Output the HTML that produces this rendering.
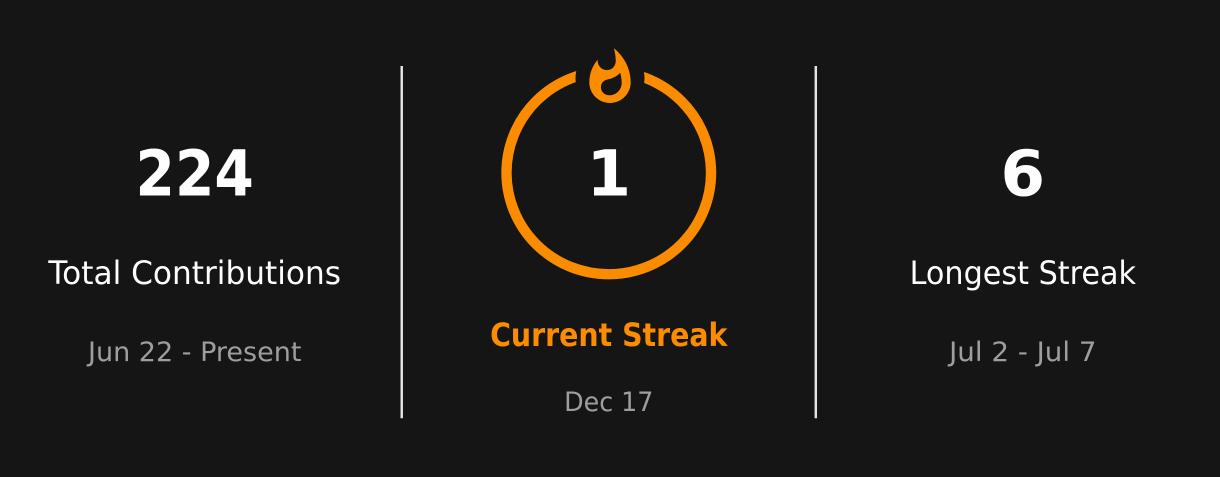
<!DOCTYPE html>
<html><head><meta charset="utf-8"><style>
html,body{margin:0;padding:0;background:#151515;width:1220px;height:477px;overflow:hidden}
svg{display:block}
text{font-family:"DejaVu Sans","Liberation Sans",sans-serif;text-anchor:middle}
</style></head><body>
<svg width="1220" height="477" viewBox="0 0 495 195" preserveAspectRatio="none">
<rect width="495" height="195" fill="#151515"/>
<line x1="163" y1="27" x2="163" y2="171" stroke="#e4e2e2" stroke-width="1"/>
<line x1="331" y1="27" x2="331" y2="171" stroke="#e4e2e2" stroke-width="1"/>
<text x="79" y="80" fill="#fefefe" font-weight="700" font-size="26" textLength="48" lengthAdjust="spacingAndGlyphs">224</text>
<text x="79" y="116" fill="#fefefe" font-size="13" textLength="118.7" lengthAdjust="spacingAndGlyphs">Total Contributions</text>
<text x="79" y="147.5" fill="#9e9e9e" font-size="11" textLength="86.6" lengthAdjust="spacingAndGlyphs">Jun 22 - Present</text>
<defs><mask id="m"><rect width="495" height="195" fill="white"/><circle cx="247.5" cy="32" r="14" fill="black"/></mask></defs>
<circle cx="247" cy="70.6" r="41.5" fill="none" stroke="#fb8c00" stroke-width="4.2" mask="url(#m)"/>
<g transform="translate(247.5,19) scale(1.05)"><path fill="#fb8c00" d="M 1.5 0.67 C 1.5 0.67 2.24 3.32 2.24 5.47 C 2.24 7.530.89 9.2 -1.17 9.2 C -3.23 9.2 -4.79 7.53 -4.79 5.47 L -4.76 5.11 C -6.78 7.51 -8 10.62 -8 13.99 C -8 18.41 -4.42 22 0 22 C 4.42 22 8 18.41 8 13.99 C 8 8.6 5.41 3.79 1.5 0.67 Z M -0.29 19 C -2.07 19 -3.51 17.6 -3.51 15.86 C -3.51 14.24 -2.46 13.1 -0.7 12.74 C 1.07 12.38 2.9 11.53 3.92 10.16 C 4.31 11.45 4.51 12.81 4.51 14.2 C 4.51 16.85 2.36 19 -0.29 19 Z"/></g>
<text x="247" y="80" fill="#fefefe" font-weight="700" font-size="26">1</text>
<text x="247" y="141.5" fill="#fb8c00" font-weight="700" font-size="13" textLength="96.3" lengthAdjust="spacingAndGlyphs">Current Streak</text>
<text x="247" y="168" fill="#9e9e9e" font-size="11" textLength="36.2" lengthAdjust="spacingAndGlyphs">Dec 17</text>
<text x="415" y="80" fill="#fefefe" font-weight="700" font-size="26">6</text>
<text x="415" y="116" fill="#fefefe" font-size="13" textLength="91.9" lengthAdjust="spacingAndGlyphs">Longest Streak</text>
<text x="415" y="147.5" fill="#9e9e9e" font-size="11" textLength="59.8" lengthAdjust="spacingAndGlyphs">Jul 2 - Jul 7</text>
</svg>
</body></html>
